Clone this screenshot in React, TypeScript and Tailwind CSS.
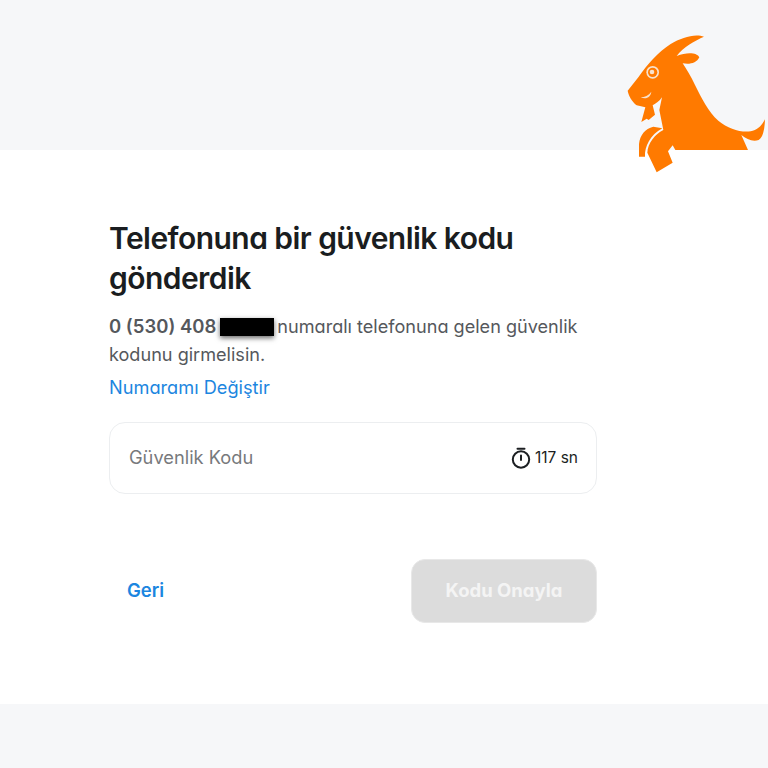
import React from "react";

function Goat() {
  return (
    <svg className="absolute left-[600px] top-[20px]" width="168" height="160" viewBox="0 0 504 480">
      <path
        fill="#ff7a00"
        d="M312 50C285 40 245 52 212 72C175 95 140 135 115 172L83 212C86 228 96 245 110 256L136 262L124 306L140 296L146 300L165 284L158 256C168 250 178 244 186 232L178 270L190 330C165 343 143 370 142 398L170 457L218 428L204 394L218 376L226 390L444 390L424 345C440 358 458 366 476 360C490 352 494 325 495 298C486 316 472 330 452 334C420 338 385 326 355 302C325 276 305 235 285 195C272 168 260 148 248 130C268 134 290 130 298 112C292 98 262 95 230 108C250 80 285 62 312 50Z"
      />
      <path fill="#ff7a00" d="M117 410L135 410C134 380 150 345 187 325L160 320C135 326 120 345 117 372Z" />
      <circle cx="158" cy="157" r="19" fill="#f8e2cc" />
      <circle cx="158" cy="157" r="14" fill="#ff7a00" />
      <circle cx="156" cy="156" r="7" fill="#f8e2cc" />
      <path fill="#f8e2cc" d="M122 232C134 232 146 226 154 215C152 230 140 240 122 232Z" />
    </svg>
  );
}

function Timer() {
  return (
    <svg width="22" height="22" viewBox="0 0 22 22" fill="none" stroke="#1c1f22" strokeWidth="2">
      <circle cx="11" cy="12.5" r="8.2" />
      <path d="M7.5 1.8h7M11 8.5v4.5" strokeLinecap="round" />
    </svg>
  );
}

export default function App() {
  return (
    <div
      className="relative flex h-[768px] w-[768px] flex-col overflow-hidden bg-[#f6f7f9] [font-feature-settings:'cv11']"
      style={{ fontFamily: "Inter, 'Noto Sans', sans-serif" }}
    >
      <div className="h-[150px] shrink-0" />
      <main className="h-[554px] shrink-0 bg-white pl-[109px] pt-[68px]">
        <div className="w-[488px]">
          <h1 className="w-[440px] text-[30px] leading-[40px] font-semibold tracking-[-0.55px] text-[#1a1d20]">
            Telefonuna bir güvenlik kodu gönderdik
          </h1>
          <p className="mt-[14px] text-[18.1px] leading-[28px] text-[#55585c]">
            <span className="text-[18.5px] font-semibold">0 (530) 408</span>
            <span className="ml-[4px] mr-[3px] inline-block h-[18px] w-[54px] bg-black align-[-3px] shadow-[0_2px_5px_rgba(0,0,0,0.6)]" />
            numaralı telefonuna gelen güvenlik kodunu girmelisin.
          </p>
          <a className="mt-[5px] block text-[18.2px] leading-[28px] text-[#1c86e0]">Numaramı Değiştir</a>
          <div className="mt-[21px] flex h-[72px] items-center justify-between rounded-[16px] border border-[#eceef0] bg-white pl-[19px] pr-[18px]">
            <span className="text-[18.25px] text-[#77797c]">Güvenlik Kodu</span>
            <span className="flex items-center gap-[3px] text-[15.5px] text-[#1c1f22]">
              <Timer />
              117 sn
            </span>
          </div>
          <div className="mt-[65px] flex items-center justify-between">
            <button className="pl-[18px] text-[18.5px] font-semibold text-[#1c86e0]">Geri</button>
            <button className="h-[64px] w-[186px] rounded-[14px] border border-[#e8e8e8] bg-[#dcdcdc] text-[18.5px] font-bold text-[#f4f4f4]">
              Kodu Onayla
            </button>
          </div>
        </div>
      </main>
      <div className="flex-1" />
      <Goat />
    </div>
  );
}
